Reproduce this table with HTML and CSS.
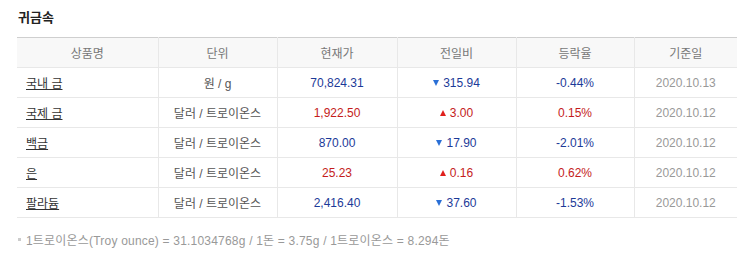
FILE: index.html
```html
<!DOCTYPE html>
<html lang="ko">
<head>
<meta charset="utf-8">
<link rel="stylesheet" href="styles.css">
</head>
<body>
<div class="wrap">
  <h3 class="title">귀금속</h3>
  <table class="tbl">
    <colgroup>
      <col class="c1"><col class="c2"><col class="c3"><col class="c4"><col class="c5"><col class="c6">
    </colgroup>
    <thead>
      <tr><th>상품명</th><th>단위</th><th>현재가</th><th>전일비</th><th>등락율</th><th>기준일</th></tr>
    </thead>
    <tbody>
      <tr><td class="name"><a>국내 금</a></td><td class="unit">원 / g</td><td class="dn">70,824.31</td><td class="dn"><span class="tri-dn"></span>315.94</td><td class="dn">-0.44%</td><td class="date">2020.10.13</td></tr>
      <tr><td class="name"><a>국제 금</a></td><td class="unit">달러 / 트로이온스</td><td class="up">1,922.50</td><td class="up"><span class="tri-up"></span>3.00</td><td class="up">0.15%</td><td class="date">2020.10.12</td></tr>
      <tr><td class="name"><a>백금</a></td><td class="unit">달러 / 트로이온스</td><td class="dn">870.00</td><td class="dn"><span class="tri-dn"></span>17.90</td><td class="dn">-2.01%</td><td class="date">2020.10.12</td></tr>
      <tr><td class="name"><a>은</a></td><td class="unit">달러 / 트로이온스</td><td class="up">25.23</td><td class="up"><span class="tri-up"></span>0.16</td><td class="up">0.62%</td><td class="date">2020.10.12</td></tr>
      <tr><td class="name"><a>팔라듐</a></td><td class="unit">달러 / 트로이온스</td><td class="dn">2,416.40</td><td class="dn"><span class="tri-dn"></span>37.60</td><td class="dn">-1.53%</td><td class="date">2020.10.12</td></tr>
    </tbody>
  </table>
  <p class="note"><span class="dot"></span>1트로이온스(Troy ounce) = 31.1034768g / 1돈 = 3.75g / 1트로이온스 = 8.294돈</p>
</div>
</body>
</html>
```
FILE: styles.css
```css
html, body { margin: 0; padding: 0; background: #fff; }
body { font-family: "Liberation Sans", "Noto Sans CJK KR", sans-serif; font-size: 12px; color: #333; }
.wrap { padding: 10px 9px 0 17px; }
.title { margin: 0 0 0 1px; height: 27px; font-size: 13px; font-weight: bold; color: #222; line-height: 16px; }
.tbl { width: 720px; border-collapse: collapse; table-layout: fixed; border-top: 1px solid #cfcfcf; }
.c1 { width: 141px; } .c2 { width: 119px; } .c3 { width: 120px; } .c4 { width: 119px; } .c5 { width: 118px; } .c6 { width: 103px; }
.tbl th { height: 29px; padding: 0; background: #f8f8f8; color: #777; font-weight: normal; text-align: center; border-bottom: 1px solid #e8e8e8; border-left: 1px solid #e8e8e8; }
.tbl td { height: 29px; padding: 0; text-align: center; border-bottom: 1px solid #e8e8e8; border-left: 1px solid #e8e8e8; }
.tbl th:first-child, .tbl td:first-child { border-left: 0; }
.tbl td.name { text-align: left; padding-left: 9px; }
.name a { color: #333; text-decoration: underline; }
.unit { color: #555; }
.dn { color: #1c3a98; }
.up { color: #c41c1c; }
.date { color: #999; }
.tri-dn, .tri-up { display: inline-block; width: 0; height: 0; margin-right: 4px; vertical-align: 1px; border-left: 3.5px solid transparent; border-right: 3.5px solid transparent; }
.tri-dn { border-top: 6px solid #2a6fd6; }
.tri-up { border-bottom: 6px solid #e0201c; }
.note { margin: 13px 0 0 0; color: #999; font-size: 12px; letter-spacing: 0.2px; display: flex; align-items: center; }
.dot { display: inline-block; width: 3px; height: 3px; background: #ccc; margin: 0 5px 0 1px; }
```
